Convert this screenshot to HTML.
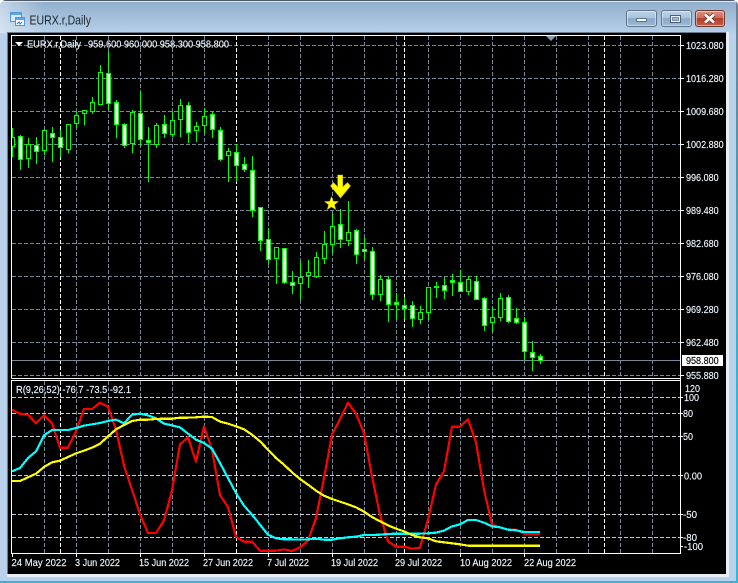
<!DOCTYPE html>
<html><head><meta charset="utf-8"><title>EURX.r,Daily</title>
<style>
html,body{margin:0;padding:0;background:#fff}
body{width:738px;height:583px;overflow:hidden;position:relative;font-family:"Liberation Sans",sans-serif}
#win{position:absolute;left:0;top:0;width:738px;height:583px;background:#b9d1ea;border-radius:6px 6px 0 0;overflow:hidden}
#tb{position:absolute;left:0;top:0;width:738px;height:33px;background:linear-gradient(to right,rgba(255,255,255,.45),rgba(255,255,255,0) 45px),linear-gradient(#8fadcb,#b6d0e9)}
#topl{position:absolute;left:0;top:0;width:738px;height:1px;background:#4f5a66}
#topl2{position:absolute;left:0;top:1px;width:738px;height:1px;background:#dfe8f0}
#botl{position:absolute;left:0;top:581px;width:738px;height:2px;background:#35b6d2}
#rl{position:absolute;left:736px;top:0;width:2px;height:583px;background:linear-gradient(#6f7f8e,#35b6d2 70%)}
#strip{position:absolute;left:7px;top:32px;width:722px;height:545px;background:#e6eef6}
#bl{position:absolute;left:7px;top:32px;width:719px;height:1px;background:#6b7b8c}
#bl2{position:absolute;left:7px;top:32px;width:1px;height:542px;background:#6b7b8c}
#cl{position:absolute;left:8px;top:33px;width:718px;height:541px;background:#000}
.b{position:absolute;top:10px;height:17px;box-sizing:border-box;border:1px solid #62748a;border-radius:3px;box-shadow:inset 0 0 0 1px rgba(255,255,255,.45);background:linear-gradient(#bcd2e8 0,#a9c3de 45%,#8ba8c8 50%,#9db9d6 100%)}
#b1{left:626px;width:31px}
#b2{left:661px;width:31px}
#b3{left:695px;width:30px;border-color:#6d3a34;background:linear-gradient(#dc9285 0,#cf6a58 45%,#b33b28 50%,#c4604b 100%)}
svg{position:absolute;left:0;top:0}
text{font-family:"Liberation Sans",sans-serif;font-size:10.5px;fill:#f4faff;stroke:#dff0ff;stroke-width:.15}
</style></head><body>
<div id="win">
<div id="tb"></div><div id="topl"></div><div id="topl2"></div>
<div id="botl"></div><div id="rl"></div>
<div id="strip"></div><div id="bl"></div><div id="bl2"></div>
<div id="cl"></div>
<div class="b" id="b1"></div><div class="b" id="b2"></div><div class="b" id="b3"></div>
</div>
<svg width="738" height="583" viewBox="0 0 738 583" xmlns="http://www.w3.org/2000/svg">
<!-- title icon -->
<rect x="10.5" y="12.5" width="11" height="9" fill="#d9ebfb" stroke="#4f97d8"/>
<rect x="11" y="13" width="10" height="2" fill="#5ea6e6"/>
<rect x="15.5" y="17.5" width="9" height="8" fill="#f2f8fe" stroke="#4f97d8"/>
<rect x="16" y="18" width="8" height="2" fill="#5ea6e6"/>
<path d="M17 24l2-2 1 2 2-2" fill="none" stroke="#3a7fc0"/>
<text x="29.5" y="24.5" style="font-size:12.5px;fill:#1c2530;stroke:none" textLength="61.5" lengthAdjust="spacingAndGlyphs">EURX.r,Daily</text>
<!-- buttons -->
<rect x="636.5" y="18.5" width="10" height="3" rx="1" fill="#fff" stroke="#5d6f86"/>
<rect x="670.5" y="15.5" width="10" height="7" fill="#e8eff6" stroke="#4e5f74"/>
<rect x="672.5" y="17.5" width="6" height="3" fill="#9fb9d4" stroke="#4e5f74" stroke-width=".6"/>
<path d="M705 14.5l9 8M714 14.5l-9 8" stroke="#6d3a34" stroke-width="4.4" fill="none"/>
<path d="M705 14.5l9 8M714 14.5l-9 8" stroke="#fff" stroke-width="2.6" fill="none"/>

<!-- grid -->
<g shape-rendering="crispEdges" fill="none">
<path stroke="#778899" stroke-dasharray="4 2" d="M12 45.5H680M12 78.5H680M12 111.5H680M12 144.5H680M12 177.5H680M12 210.5H680M12 243.5H680M12 276.5H680M12 309.5H680M12 342.5H680M12 375.5H680"/>
<path stroke="#778899" stroke-dasharray="4 2" d="M44.5 36V378M76.5 36V378M108.5 36V378M140.5 36V378M172.5 36V378M204.5 36V378M268.5 36V378M300.5 36V378M332.5 36V378M364.5 36V378M396.5 36V378M428.5 36V378M460.5 36V378M492.5 36V378M524.5 36V378M556.5 36V378M588.5 36V378M620.5 36V378M652.5 36V378"/>
<path stroke="#ffffff" stroke-dasharray="4 2" d="M60.5 36V378M236.5 36V378M404.5 36V378M604.5 36V378"/>
<path stroke="#778899" stroke-dasharray="4 2" d="M44.5 381V553M76.5 381V553M108.5 381V553M140.5 381V553M172.5 381V553M204.5 381V553M268.5 381V553M300.5 381V553M332.5 381V553M364.5 381V553M396.5 381V553M428.5 381V553M460.5 381V553M492.5 381V553M524.5 381V553M556.5 381V553M588.5 381V553M620.5 381V553M652.5 381V553"/>
<path stroke="#ffffff" stroke-dasharray="4 2" d="M60.5 381V553M236.5 381V553M404.5 381V553M604.5 381V553"/>
<path stroke="#c8ccd2" stroke-dasharray="4 2" d="M12 397.5H680M12 413.5H680M12 436.5H680M12 475.5H680M12 514.5H680M12 537.5H680"/>
<path stroke="#778899" d="M12 360.5H680"/>
</g>

<!-- wicks -->
<path shape-rendering="crispEdges" fill="none" stroke="#00ff00" d="M12.5 128V157M20.5 135V170M28.5 138V168M36.5 137V164M44.5 129V155M52.5 127V162M60.5 130V157M68.5 124V153M76.5 112V128M84.5 110V125M92.5 97V114M100.5 65V105M108.5 52V110M116.5 100V138M124.5 123V148M132.5 110V153M140.5 92V146M148.5 127V182M156.5 123V148M164.5 115V138M172.5 112V137M180.5 99V137M188.5 102V143M196.5 122V142M204.5 108V133M212.5 111V138M220.5 127V161M228.5 148V182M236.5 144V182M244.5 157V172M252.5 156V217M260.5 207V251M268.5 228V264M276.5 247V284M284.5 248V284M292.5 271V294M300.5 261V300M308.5 260V288M316.5 252V278M324.5 231V264M332.5 213V253M340.5 209V248M348.5 201V246M356.5 229V264M364.5 237V260M372.5 247V300M380.5 275V301M388.5 276V322M396.5 293V320M404.5 297V319M412.5 301V327M420.5 306V324M428.5 287V320M436.5 282V298M444.5 277V299M452.5 274V296M460.5 270V292M468.5 276V295M476.5 276V300M484.5 297V331M492.5 307V332M500.5 293V321M508.5 295V323M516.5 308V324M524.5 317V360M532.5 341V371M540.5 354V364"/>
<!-- hollow bodies -->
<path shape-rendering="crispEdges" fill="#000" stroke="#00ff00" d="M10.5 137.5h4v9h-4zM26.5 144.5h4v14h-4zM42.5 130.5h4v20h-4zM66.5 124.5h4v25h-4zM74.5 115.5h4v8h-4zM82.5 110.5h4v3h-4zM90.5 102.5h4v9h-4zM98.5 72.5h4v32h-4zM130.5 112.5h4v31h-4zM154.5 125.5h4v19h-4zM170.5 120.5h4v14h-4zM178.5 105.5h4v14h-4zM194.5 126.5h4v4h-4zM202.5 116.5h4v9h-4zM226.5 151.5h4v4h-4zM274.5 247.5h4v11h-4zM298.5 277.5h4v6h-4zM306.5 272.5h4v3h-4zM314.5 257.5h4v19h-4zM322.5 244.5h4v14h-4zM330.5 226.5h4v18h-4zM346.5 232.5h4v8h-4zM378.5 279.5h4v15h-4zM418.5 312.5h4v7h-4zM426.5 287.5h4v25h-4zM466.5 279.5h4v12h-4zM490.5 317.5h4v5h-4zM498.5 298.5h4v19h-4z"/>
<!-- filled bodies -->
<path shape-rendering="crispEdges" fill="#fff" stroke="#00ff00" d="M18.5 136.5h4v23h-4zM34.5 145.5h4v6h-4zM50.5 133.5h4v4h-4zM58.5 137.5h4v10h-4zM106.5 73.5h4v30h-4zM114.5 102.5h4v22h-4zM122.5 124.5h4v21h-4zM138.5 113.5h4v26h-4zM146.5 140.5h4v2h-4zM162.5 124.5h4v9h-4zM186.5 105.5h4v27h-4zM210.5 114.5h4v15h-4zM218.5 130.5h4v29h-4zM234.5 152.5h4v13h-4zM242.5 164.5h4v5h-4zM250.5 170.5h4v40h-4zM258.5 207.5h4v33h-4zM266.5 239.5h4v20h-4zM282.5 248.5h4v34h-4zM290.5 282.5h4v3h-4zM338.5 224.5h4v15h-4zM354.5 230.5h4v24h-4zM362.5 249.5h4v2h-4zM370.5 251.5h4v43h-4zM386.5 279.5h4v25h-4zM394.5 302.5h4v2h-4zM402.5 305.5h4v3h-4zM410.5 305.5h4v13h-4zM434.5 286.5h4v1h-4zM442.5 285.5h4v5h-4zM450.5 280.5h4v2h-4zM458.5 282.5h4v9h-4zM474.5 281.5h4v18h-4zM482.5 298.5h4v27h-4zM506.5 297.5h4v24h-4zM514.5 318.5h4v4h-4zM522.5 322.5h4v29h-4zM530.5 352.5h4v5h-4zM538.5 356.5h4v4h-4z"/>

<!-- indicator lines -->
<g transform="translate(0 383) scale(.33333)" fill="none" stroke-width="6.6" stroke-linejoin="round" shape-rendering="crispEdges">
<polyline stroke="#ff0000" points="36,80 60,92 84,95 108,121 132,97 156,121 180,194 204,194 228,145 252,78 276,78 300,59 324,71 348,140 372,248 396,320 420,394 444,450 468,450 492,412 516,322 540,184 564,163 588,236 612,130 636,200 660,336 684,372 708,462 732,476 756,476 780,503 804,503 828,503 852,499 876,504 900,493 924,473 948,405 972,285 996,155 1020,108 1044,59 1068,92 1092,150 1116,280 1140,395 1164,475 1188,491 1212,491 1236,497 1260,494 1284,410 1308,305 1332,265 1356,131 1380,131 1404,109 1428,178 1452,320 1476,425 1500,433 1524,440 1548,440 1572,452 1596,452 1620,452"/>
<polyline stroke="#00ffff" points="36,265 60,255 84,225 108,205 132,157 156,141 180,141 204,141 228,135 252,128 276,124 300,120 324,114 348,110 372,121 396,95 420,92 444,97 468,106 492,122 516,127 540,133 564,152 588,170 612,180 636,197 660,240 684,285 708,330 732,368 756,395 780,425 804,455 828,466 852,469 876,469 900,470 924,469 948,467 972,470 996,470 1020,466 1044,463 1068,461 1092,456 1116,456 1140,455 1164,453 1188,452 1212,452 1236,452 1260,452 1284,451 1308,449 1332,443 1356,430 1380,424 1404,411 1428,411 1452,419 1476,430 1500,433 1524,440 1548,442 1572,447 1596,447 1620,447"/>
<polyline stroke="#ffff00" points="36,294 60,294 84,283 108,272 132,252 156,238 180,233 204,222 228,211 252,203 276,194 300,182 324,160 348,139 372,126 396,114 420,110 444,110 468,108 492,107 516,107 540,104 564,104 588,103 612,101 636,102 660,116 684,122 708,130 732,139 756,155 780,175 804,200 828,225 852,245 876,268 900,288 924,305 948,323 972,338 996,348 1020,356 1044,364 1068,373 1092,386 1116,402 1140,415 1164,427 1188,437 1212,445 1236,456 1260,463 1284,466 1308,475 1332,478 1356,481 1380,484 1404,488 1428,488 1620,488"/>
</g>

<!-- arrow + star -->
<polygon fill="#ffff00" stroke="#c9b400" stroke-width=".6" points="337.7,175 342.7,175 342.7,187 347.5,182.5 350.5,186 340.5,198 330.5,186 333.5,182.5 337.7,187"/>
<polygon fill="#ffff00" stroke="#c9b400" stroke-width=".5" points="331.5,196.5 333.3,201.4 338.5,201.5 334.4,204.7 335.8,209.6 331.5,206.8 327.2,209.6 328.6,204.7 324.5,201.5 329.7,201.4"/>

<!-- frames -->
<g shape-rendering="crispEdges">
<rect x="8" y="36" width="3" height="517" fill="#000"/>
<path fill="none" stroke="#fff" d="M11.5 378.5V35.5H680.5V553.5H11.5V380.5H680.5M11.5 378.5H680.5"/>
<path fill="none" stroke="#fff" d="M681 45.5h3M681 78.5h3M681 111.5h3M681 144.5h3M681 177.5h3M681 210.5h3M681 243.5h3M681 276.5h3M681 309.5h3M681 342.5h3M681 375.5h3M681 397.5h2M681 413.5h2M681 436.5h2M681 475.5h2M681 514.5h2M681 537.5h2M681 546.5h2M12.5 554v3M76.5 554v3M140.5 554v3M204.5 554v3M268.5 554v3M332.5 554v3M396.5 554v3M460.5 554v3M524.5 554v3"/>
</g>
<polygon fill="#8a9bb0" points="546,36 556,36 551,41"/>
<polygon fill="#fff" points="15,42 23,42 19,46"/>

<!-- legends -->
<text x="27" y="47.5" textLength="54" lengthAdjust="spacingAndGlyphs">EURX.r,Daily</text>
<text x="88" y="47.5" textLength="141" lengthAdjust="spacingAndGlyphs">959.600 960.000 958.300 958.800</text>
<text x="16" y="393" textLength="115" lengthAdjust="spacingAndGlyphs">R(9,26,52) -76.7 -73.5 -92.1</text>

<!-- price axis -->
<rect x="682" y="355" width="41" height="11" fill="#fff"/>
<g>
<text x="686" y="49" textLength="37.7" lengthAdjust="spacingAndGlyphs">1023.080</text>
<text x="686" y="82" textLength="37.7" lengthAdjust="spacingAndGlyphs">1016.280</text>
<text x="686" y="115" textLength="37.7" lengthAdjust="spacingAndGlyphs">1009.680</text>
<text x="686" y="148" textLength="37.7" lengthAdjust="spacingAndGlyphs">1002.880</text>
<text x="686" y="181" textLength="32.7" lengthAdjust="spacingAndGlyphs">996.080</text>
<text x="686" y="214" textLength="32.7" lengthAdjust="spacingAndGlyphs">989.480</text>
<text x="686" y="247" textLength="32.7" lengthAdjust="spacingAndGlyphs">982.680</text>
<text x="686" y="280" textLength="32.7" lengthAdjust="spacingAndGlyphs">976.080</text>
<text x="686" y="313" textLength="32.7" lengthAdjust="spacingAndGlyphs">969.280</text>
<text x="686" y="346" textLength="32.7" lengthAdjust="spacingAndGlyphs">962.480</text>
<text x="686" y="364" textLength="32.7" lengthAdjust="spacingAndGlyphs" style="fill:#000;stroke:#000">958.800</text>
<text x="686" y="379" textLength="32.7" lengthAdjust="spacingAndGlyphs">955.880</text>
<text x="685" y="392" textLength="15" lengthAdjust="spacingAndGlyphs">120</text>
<text x="684" y="401" textLength="15" lengthAdjust="spacingAndGlyphs">100</text>
<text x="683" y="417" textLength="10" lengthAdjust="spacingAndGlyphs">80</text>
<text x="683" y="440" textLength="10" lengthAdjust="spacingAndGlyphs">50</text>
<text x="684" y="479.5" textLength="18" lengthAdjust="spacingAndGlyphs">0.00</text>
<text x="683" y="518" textLength="14" lengthAdjust="spacingAndGlyphs">-50</text>
<text x="683" y="541" textLength="14" lengthAdjust="spacingAndGlyphs">-80</text>
<text x="684" y="550" textLength="19" lengthAdjust="spacingAndGlyphs">-100</text>
</g>

<!-- time axis -->
<g>
<text x="11.5" y="566" textLength="55" lengthAdjust="spacingAndGlyphs">24 May 2022</text>
<text x="75" y="566" textLength="45" lengthAdjust="spacingAndGlyphs">3 Jun 2022</text>
<text x="139" y="566" textLength="50" lengthAdjust="spacingAndGlyphs">15 Jun 2022</text>
<text x="203" y="566" textLength="50" lengthAdjust="spacingAndGlyphs">27 Jun 2022</text>
<text x="267" y="566" textLength="42" lengthAdjust="spacingAndGlyphs">7 Jul 2022</text>
<text x="331" y="566" textLength="47" lengthAdjust="spacingAndGlyphs">19 Jul 2022</text>
<text x="395" y="566" textLength="47" lengthAdjust="spacingAndGlyphs">29 Jul 2022</text>
<text x="460" y="566" textLength="52" lengthAdjust="spacingAndGlyphs">10 Aug 2022</text>
<text x="524" y="566" textLength="52" lengthAdjust="spacingAndGlyphs">22 Aug 2022</text>
</g>
</svg>
</body></html>
